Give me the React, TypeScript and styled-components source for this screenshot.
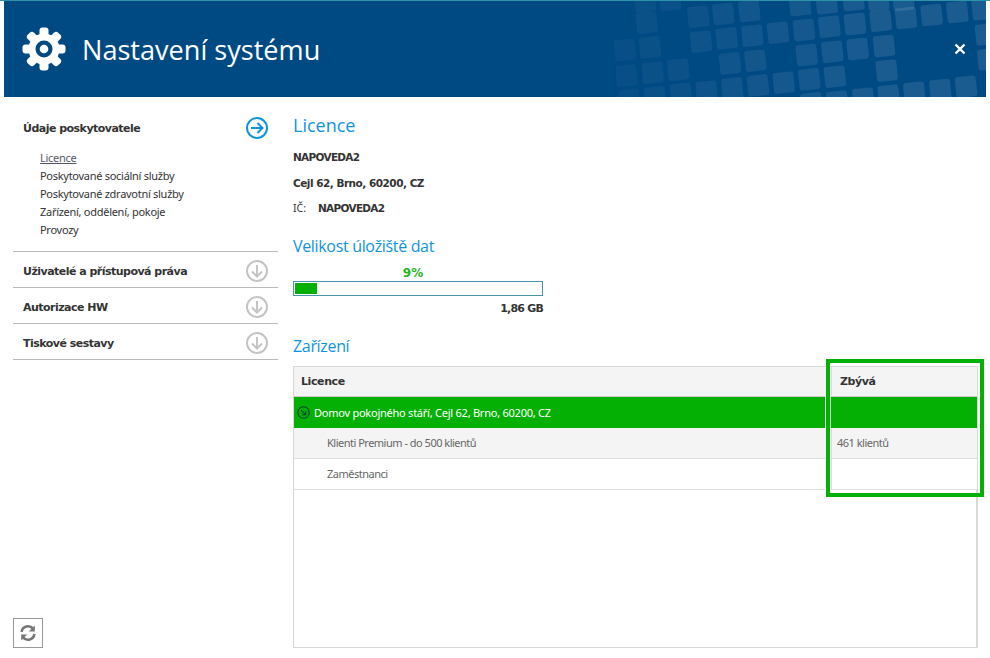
import React from "react";
import styled, { createGlobalStyle } from "styled-components";

const Global = createGlobalStyle`
  html, body { margin: 0; padding: 0; background: #fff; }
  body { font-family: "Noto Sans", "DejaVu Sans", sans-serif; font-size: 11px; color: #333; }
`;

const Page = styled.div`
  width: 990px;
  height: 658px;
  box-sizing: border-box;
  border-top: 1px solid #2c93a8;
  overflow: hidden;
  position: relative;
`;
const Header = styled.header`
  margin: 0 4px;
  height: 96px;
  background: #004a84;
  display: flex;
  align-items: center;
  padding: 0 18px;
  position: relative;
  overflow: hidden;
`;
const Pattern = styled.svg`
  position: absolute;
  left: 0;
  top: 0;
  width: 982px;
  height: 96px;
`;
const Title = styled.h1`
  margin: 0 0 0 16px;
  font-family: "Open Sans", sans-serif;
  font-weight: 400;
  font-size: 27.1px;
  color: #fff;
  position: relative;
  flex: 1;
`;
const Close = styled.svg`
  position: relative;
  width: 12px;
  height: 12px;
  margin-right: 2px;
`;
const Body = styled.div`
  display: flex;
  height: 560px;
`;
const Sidebar = styled.nav`
  width: 265px;
  margin-left: 13px;
  display: flex;
  flex-direction: column;
  position: relative;
`;
const Section = styled.div`
  border-bottom: 1px solid #bbb;
  height: 36px;
  box-sizing: border-box;
  display: flex;
  align-items: center;
  justify-content: space-between;
  padding: 3px 10px 0;
`;
const OpenSection = styled.div`
  height: 155px;
  box-sizing: border-box;
  border-bottom: 1px solid #bbb;
  padding: 0 10px;
  display: flex;
  flex-direction: column;
`;
const SectionHead = styled.div`
  display: flex;
  align-items: center;
  justify-content: space-between;
  height: 22px;
  margin-top: 20px;
`;
const SectionTitle = styled.span`
  font-family: "DejaVu Sans", sans-serif;
  font-weight: 700;
  font-size: 11px;
  letter-spacing: -0.52px;
  color: #333;
`;
const SubList = styled.ul`
  list-style: none;
  margin: 10px 0 0 17px;
  padding: 0;
`;
const SubItem = styled.li<{ $active?: boolean }>`
  height: 18px;
  line-height: 18px;
  font-size: 11px;
  letter-spacing: -0.28px;
  color: ${(p) => (p.$active ? "#555566" : "#333")};
  text-decoration: ${(p) => (p.$active ? "underline" : "none")};
`;
const RefreshButton = styled.button`
  position: absolute;
  left: 0;
  bottom: 9px;
  width: 30px;
  height: 30px;
  box-sizing: border-box;
  background: #fff;
  border: 1px solid #999;
  padding: 0;
  display: flex;
  align-items: center;
  justify-content: center;
`;
const Main = styled.main`
  margin-left: 15px;
  width: 685px;
  display: flex;
  flex-direction: column;
  padding-top: 16px;
`;
const H2 = styled.h2<{ $size: number; $top: number; $track?: number }>`
  margin: ${(p) => p.$top}px 0 0;
  font-family: "Open Sans", sans-serif;
  font-weight: 400;
  font-size: ${(p) => p.$size}px;
  letter-spacing: ${(p) => p.$track ?? 0}px;
  line-height: 24px;
  color: #0f94dc;
`;
const InfoList = styled.div`
  margin-top: 8px;
`;
const InfoLine = styled.div`
  height: 25.5px;
  line-height: 25px;
  font-family: "DejaVu Sans", sans-serif;
  font-weight: 700;
  font-size: 10.5px;
  letter-spacing: -0.5px;
  color: #333;
  display: flex;
`;
const Code = styled.span`
  letter-spacing: -0.7px;
`;
const InfoLabel = styled.span`
  font-family: "Noto Sans", sans-serif;
  font-weight: 400;
  letter-spacing: 0;
  width: 25px;
`;
const Storage = styled.div`
  width: 250px;
  margin-top: 9px;
`;
const Percent = styled.div`
  text-align: center;
  height: 13px;
  line-height: 13px;
  padding-right: 10px;
  font-family: "DejaVu Sans", sans-serif;
  font-weight: 700;
  font-size: 12px;
  color: #22b522;
`;
const Bar = styled.div`
  height: 15px;
  margin-top: 1px;
  box-sizing: border-box;
  border: 1px solid #4a93a8;
  padding: 1px;
`;
const Fill = styled.div`
  height: 100%;
  background: #05b005;
`;
const Used = styled.div`
  text-align: right;
  margin-top: 6px;
  line-height: 14px;
  font-family: "DejaVu Sans", sans-serif;
  font-weight: 700;
  font-size: 11px;
  letter-spacing: -0.8px;
  color: #333;
`;
const Table = styled.div`
  margin-top: 8px;
  height: 282px;
  box-sizing: border-box;
  border: 1px solid #d8d8d8;
  border-right-width: 2px;
  display: grid;
  grid-template-columns: 531px 146px;
  grid-template-rows: 30px 31px 31px 31px;
  column-gap: 6px;
  align-content: start;
`;
const Cell = styled.div<{ $bg?: string; $indent?: number; $divide?: boolean }>`
  background: ${(p) => p.$bg || "#fff"};
  box-sizing: border-box;
  padding-left: ${(p) => p.$indent ?? 7}px;
  display: flex;
  align-items: center;
  gap: 4px;
  color: #666;
  letter-spacing: -0.5px;
  border-bottom: 1px solid #ddd;
  border-left: ${(p) => (p.$divide ? "1px solid #ddd" : "none")};
`;
const HeadCell = styled(Cell)`
  font-family: "DejaVu Sans", sans-serif;
  font-weight: 700;
  font-size: 11px;
  letter-spacing: -0.4px;
  color: #333;
  border-bottom: 1px solid #ccc;
`;
const GreenCell = styled(Cell)`
  background: #05b005;
  color: #fff;
  padding-left: 3px;
  letter-spacing: -0.24px;
  border-bottom: none;
`;
const GreenSide = styled(GreenCell)`
  margin-left: -1px;
  border-left: 1px solid #c8e8c8;
  box-shadow: -1px 0 0 #05b005;
`;
const Highlight = styled.div`
  position: absolute;
  left: 826px;
  top: 358px;
  width: 158px;
  height: 138px;
  box-sizing: border-box;
  border: 4px solid #05b005;
  pointer-events: none;
`;

// tile centres, read off the header art
const tiles: [number, number][] = [
  [135, 5],[210, 0],[600, 15],[680, 10],[760, 0],[835, 0],[910, 0],
  [295, 50],[370, 42],[448, 33],[140, 68],
  [612, 90],[688, 80],[765, 72],[842, 62],[918, 54],[995, 45],[1072, 36],[1148, 28],
  [303, 125],[380, 115],[457, 107],[534, 98],[1158, 103],
  [75, 150],[150, 142],
  [620, 165],[697, 155],[773, 147],[852, 138],[1165, 178],
  [390, 190],[466, 182],
  [80, 227],[158, 218],[235, 209],[860, 212],
  [628, 238],[705, 230],
  [551, 248],[474, 256],[397, 265],[320, 275],[243, 282],[165, 292],[88, 300],
  [635, 310],[712, 305],[790, 296],[866, 287],[943, 278],[1021, 270],[1098, 260],
];

const Gear = () => (
  <svg width="44" height="44" viewBox="-22 -22 44 44">
    {[0, 45, 90, 135, 180, 225, 270, 315].map((a) => (
      <rect key={a} x="-4.5" y="-21.5" width="9" height="12" rx="3" fill="#fff" transform={`rotate(${a})`} />
    ))}
    <circle r="15.5" fill="#fff" />
    <circle r="8.5" fill="#004a84" />
    <circle r="4.3" fill="#fff" />
  </svg>
);

const CircleArrow = ({ color, dir }: { color: string; dir: "right" | "down" }) => (
  <svg width="22" height="22" viewBox="0 0 22 22">
    <circle cx="11" cy="11" r="10" fill="none" stroke={color} strokeWidth={2} />
    <path
      d={dir === "right" ? "M5 11h11M11.5 6l5 5-5 5" : "M11 5v11M6 11.5l5 5 5-5"}
      fill="none"
      stroke={color}
      strokeWidth={2}
    />
  </svg>
);

const SmallArrow = () => (
  <svg width="13" height="13" viewBox="0 0 13 13">
    <circle cx="6.5" cy="6.5" r="5.7" fill="none" stroke="#043" strokeWidth="1.1" />
    <path d="M4 4l4.5 4.5M8.8 5v3.8H5" fill="none" stroke="#043" strokeWidth="1.1" />
  </svg>
);

const RefreshIcon = () => (
  <svg width="18" height="18" viewBox="0 0 18 18">
    <path d="M2.6 8A6.5 6.5 0 0 1 14 4.6" fill="none" stroke="#777" strokeWidth="2.6" />
    <path d="M15.8 1.5v6h-6z" fill="#777" />
    <path d="M15.4 10A6.5 6.5 0 0 1 4 13.4" fill="none" stroke="#777" strokeWidth="2.6" />
    <path d="M2.2 16.5v-6h6z" fill="#777" />
  </svg>
);

export default function App() {
  return (
    <Page>
      <Global />
      <Header>
        <Pattern viewBox="0 0 982 96">
          {tiles.map(([x, y], i) => {
            const cx = 596 + x / 3;
            const cy = y / 3 - 1;
            const op = 0.025 + 0.075 * Math.min(1, x / 800);
            return (
              <rect
                key={i}
                x={cx - 10.5}
                y={cy - 10.5}
                width="21"
                height="21"
                rx="3"
                fill="#fff"
                opacity={op}
                transform={`rotate(-6 ${cx} ${cy})`}
              />
            );
          })}
        </Pattern>
        <Gear />
        <Title>Nastavení systému</Title>
        <Close viewBox="0 0 12 12">
          <path d="M1.5 1.5l9 9M10.5 1.5l-9 9" stroke="#fff" strokeWidth="2.4" />
        </Close>
      </Header>
      <Body>
        <Sidebar>
          <OpenSection>
            <SectionHead>
              <SectionTitle>Údaje poskytovatele</SectionTitle>
              <CircleArrow color="#0f94dc" dir="right" />
            </SectionHead>
            <SubList>
              <SubItem $active>Licence</SubItem>
              <SubItem>Poskytované sociální služby</SubItem>
              <SubItem>Poskytované zdravotní služby</SubItem>
              <SubItem>Zařízení, oddělení, pokoje</SubItem>
              <SubItem>Provozy</SubItem>
            </SubList>
          </OpenSection>
          <Section>
            <SectionTitle>Uživatelé a přístupová práva</SectionTitle>
            <CircleArrow color="#c4c4c4" dir="down" />
          </Section>
          <Section>
            <SectionTitle>Autorizace HW</SectionTitle>
            <CircleArrow color="#c4c4c4" dir="down" />
          </Section>
          <Section>
            <SectionTitle>Tiskové sestavy</SectionTitle>
            <CircleArrow color="#c4c4c4" dir="down" />
          </Section>
          <RefreshButton aria-label="Obnovit">
            <RefreshIcon />
          </RefreshButton>
        </Sidebar>
        <Main>
          <H2 $size={18} $top={0}>Licence</H2>
          <InfoList>
            <InfoLine><Code>NAPOVEDA2</Code></InfoLine>
            <InfoLine>Cejl 62, Brno, 60200, CZ</InfoLine>
            <InfoLine><InfoLabel>IČ:</InfoLabel><Code>NAPOVEDA2</Code></InfoLine>
          </InfoList>
          <H2 $size={16} $top={12} $track={-0.33}>Velikost úložiště dat</H2>
          <Storage>
            <Percent>9%</Percent>
            <Bar><Fill style={{ width: "9%" }} /></Bar>
            <Used>1,86 GB</Used>
          </Storage>
          <H2 $size={16} $top={18} $track={-0.33}>Zařízení</H2>
          <Table>
            <HeadCell $bg="#f4f4f4">Licence</HeadCell>
            <HeadCell $bg="#f4f4f4" $divide $indent={8}>Zbývá</HeadCell>
            <GreenCell><SmallArrow />Domov pokojného stáří, Cejl 62, Brno, 60200, CZ</GreenCell>
            <GreenSide />
            <Cell $bg="#f4f4f4" $indent={33}>Klienti Premium - do 500 klientů</Cell>
            <Cell $bg="#f4f4f4" $divide $indent={5}>461 klientů</Cell>
            <Cell $indent={33}>Zaměstnanci</Cell>
            <Cell $divide />
          </Table>
        </Main>
      </Body>
      <Highlight />
    </Page>
  );
}
